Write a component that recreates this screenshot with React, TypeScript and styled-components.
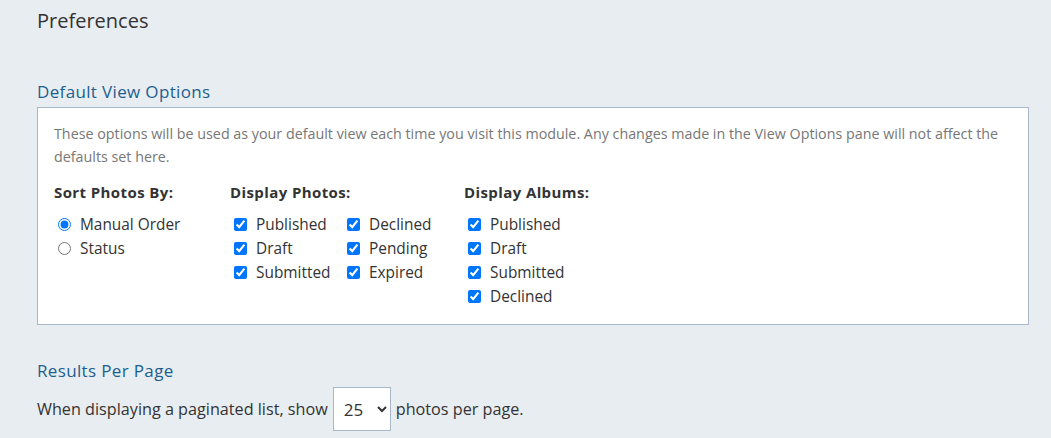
import React from "react";
import styled, { createGlobalStyle } from "styled-components";

const Global = createGlobalStyle`
  html, body { margin: 0; padding: 0; background: #e8edf2; }
  body { font-family: "Open Sans", Lato, sans-serif; color: #333; }
`;

const Page = styled.div`
  padding: 7px 22px 0 37px;
`;

const Title = styled.h1`
  margin: 0;
  font-size: 20px;
  font-weight: 400;
  line-height: 28px;
  color: #333;
`;

const SectionTitle = styled.h2<{ $top: number }>`
  margin: ${(p) => p.$top}px 0 0;
  font-size: 17px;
  letter-spacing: 0.35px;
  font-weight: 400;
  line-height: 24px;
  color: #1d5f8f;
`;

const Panel = styled.div`
  margin-top: 3px;
  background: #fff;
  border: 1px solid #a9b8c8;
  padding: 14px 16px 16px;
`;

const Description = styled.p`
  margin: 0;
  font-size: 14.3px;
  line-height: 23px;
  color: #777;
`;

const Groups = styled.div`
  display: flex;
  margin-top: 14px;
`;

const Group = styled.div<{ $width: number }>`
  width: ${(p) => p.$width}px;
`;

const GroupLabel = styled.div`
  font-size: 15px;
  letter-spacing: 0.4px;
  font-weight: 700;
  line-height: 20px;
  color: #333;
  margin-bottom: 10px;
`;

const Columns = styled.div`
  display: flex;
`;

const Column = styled.div<{ $width?: number }>`
  display: flex;
  flex-direction: column;
  width: ${(p) => (p.$width ? `${p.$width}px` : "auto")};
`;

const Option = styled.label`
  display: flex;
  align-items: center;
  height: 24px;
  font-size: 15.4px;
  color: #333;
  cursor: pointer;
  input {
    margin: 0 9px 0 4px;
    width: 13px;
    height: 13px;
  }
`;

const Line = styled.div`
  display: flex;
  align-items: center;
  margin-top: 4px;
  font-size: 16.2px;
  color: #333;
`;

const Select = styled.select`
  margin: 0 5px 0 5px;
  width: 58px;
  height: 44px;
  border: 1px solid #a9b8c8;
  background: #fff;
  font-family: inherit;
  font-size: 17px;
  color: #333;
  padding: 0 4px 0 6px;
  border-radius: 0;
`;

const Check = ({ label, radio, checked, name }: { label: string; radio?: boolean; checked?: boolean; name?: string }) => (
  <Option>
    <input type={radio ? "radio" : "checkbox"} name={name} defaultChecked={checked} />
    {label}
  </Option>
);

export default function App() {
  return (
    <>
      <Global />
      <Page>
        <Title>Preferences</Title>
        <SectionTitle $top={45}>Default View Options</SectionTitle>
        <Panel>
          <Description>
            These options will be used as your default view each time you visit this module. Any changes made in the View Options pane will not affect the defaults set here.
          </Description>
          <Groups>
            <Group $width={176}>
              <GroupLabel>Sort Photos By:</GroupLabel>
              <Column>
                <Check radio name="sort" label="Manual Order" checked />
                <Check radio name="sort" label="Status" />
              </Column>
            </Group>
            <Group $width={234}>
              <GroupLabel>Display Photos:</GroupLabel>
              <Columns>
                <Column $width={113}>
                  <Check label="Published" checked />
                  <Check label="Draft" checked />
                  <Check label="Submitted" checked />
                </Column>
                <Column>
                  <Check label="Declined" checked />
                  <Check label="Pending" checked />
                  <Check label="Expired" checked />
                </Column>
              </Columns>
            </Group>
            <Group $width={200}>
              <GroupLabel>Display Albums:</GroupLabel>
              <Column>
                <Check label="Published" checked />
                <Check label="Draft" checked />
                <Check label="Submitted" checked />
                <Check label="Declined" checked />
              </Column>
            </Group>
          </Groups>
        </Panel>
        <SectionTitle $top={34}>Results Per Page</SectionTitle>
        <Line>
          When displaying a paginated list, show
          <Select defaultValue="25">
            <option>10</option>
            <option>25</option>
            <option>50</option>
            <option>100</option>
          </Select>
          photos per page.
        </Line>
      </Page>
    </>
  );
}
